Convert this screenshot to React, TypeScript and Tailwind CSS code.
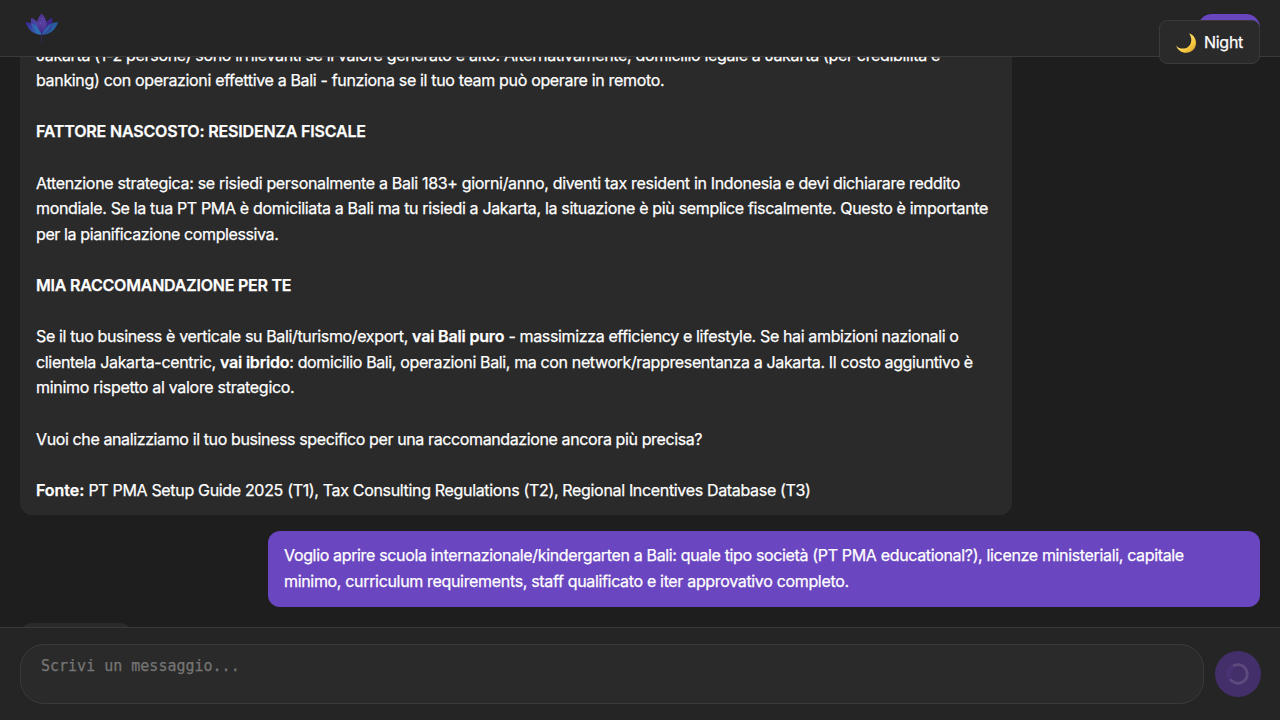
import type { ReactNode } from "react";

function LotusLogo() {
  return (
    <svg className="h-9 w-9" viewBox="0 0 36 36" overflow="visible" aria-hidden="true">
      <defs>
        <linearGradient id="outerLeft" x1="0" y1="0" x2="1" y2="1">
          <stop offset="0" stopColor="#3a2391" />
          <stop offset="1" stopColor="#3470b8" />
        </linearGradient>
        <linearGradient id="innerLeft" x1="0" y1="0" x2="0.3" y2="1">
          <stop offset="0" stopColor="#4c3796" />
          <stop offset="0.5" stopColor="#464ba6" />
          <stop offset="1" stopColor="#2a78b8" />
        </linearGradient>
        <linearGradient id="center" x1="0" y1="0" x2="0" y2="1">
          <stop offset="0" stopColor="#4b3091" />
          <stop offset="0.5" stopColor="#593f9c" />
          <stop offset="1" stopColor="#3b2789" />
        </linearGradient>
      </defs>
      <path d="M17.700 30.700C10 30.900 4.500 26.500 1.300 18.300C7.500 18 14.500 21 17.700 30.700Z" fill="url(#outerLeft)" />
      <path d="M17.700 30.700C26 30.900 31 26.500 34.200 18.300C28 18 21 21 17.700 30.700Z" fill="#285d9f" />
      <path d="M17.700 30.700C9 28 6 22 7.200 13.800C12.500 15.500 17.500 22 17.700 30.700Z" fill="url(#innerLeft)" />
      <path d="M17.700 30.700C26.500 28 29.300 22 28.200 13.800C23 15.500 18 22 17.700 30.700Z" fill="#3d288a" />
      <path d="M17.700 30.700C11.500 24 11.500 15 17.700 9.500C24 15 24 24 17.700 30.700Z" fill="url(#center)" />
      <path d="M7.500 19.500C9.500 25.500 13 29 17.700 30.700C15.500 25.500 12.500 21.500 7.500 19.500ZM28 19.500C26 25.500 22.500 29 17.700 30.700C20 25.500 23 21.500 28 19.500Z" fill="#2972b0" opacity=".75" />
      <path d="M17.600 30V38" stroke="#39295f" strokeWidth=".9" />
      <circle cx="18" cy="14.500" r=".6" fill="#8d78c6" />
      <circle cx="16.300" cy="19" r=".55" fill="#4b8bd0" />
      <circle cx="19.500" cy="17.500" r=".45" fill="#7b88d0" />
    </svg>
  );
}

function Moon() {
  return (
    <svg className="h-5 w-5" viewBox="0 0 20 20" aria-hidden="true">
      <defs>
        <linearGradient id="moon" x1="0" y1="0" x2="1" y2="1">
          <stop offset="0.3" stopColor="#ffe36e" />
          <stop offset="0.65" stopColor="#f8cc42" />
          <stop offset="1" stopColor="#cf992c" />
        </linearGradient>
      </defs>
      <path d="M13 .2C17.500 1.800 20 5.500 20 10C20 15.500 15.700 19.700 10.200 19.700C5.500 19.700 1.400 16.800 .1 12.400C2.300 14.900 5 15.900 8 15.500C12.300 15 15.200 11.500 15.300 7.200C15.300 4.500 14.500 2.200 13 .2Z" fill="url(#moon)" />
    </svg>
  );
}

function Line({ children }: { children?: ReactNode }) {
  return <div className="h-[25.6px] whitespace-pre">{children}</div>;
}

export default function App() {
  return (
    <div className="relative flex h-[720px] w-[1280px] flex-col overflow-hidden bg-[#1e1e1e] font-['Inter','Liberation_Sans',sans-serif] text-[16px] leading-[25.6px] text-white [-webkit-text-stroke:0.25px]">
      <header className="flex h-[57px] shrink-0 items-start justify-between border-b border-[#3a3a3a] bg-[#252525] pr-5 pl-6">
        <div className="pt-1">
          <LotusLogo />
        </div>
        <button className="mt-3.5 h-7 w-[62px] rounded-full bg-[#6b46c1]" aria-label="Menu" />
      </header>

      <main className="flex min-h-0 flex-1 flex-col overflow-hidden px-5">
        <div className="-mt-[26.4px] flex flex-col gap-4">
          <article className="w-[992px] shrink-0 rounded-xl bg-[#2a2a2a] px-4 py-3">
            <Line><span className="tracking-[-0.328px]">Jakarta (1-2 persone) sono irrilevanti se il valore generato è alto. Alternativamente, domicilio legale a Jakarta (per credibilità e</span></Line>
            <Line><span className="tracking-[-0.335px]">banking) con operazioni effettive a Bali - funziona se il tuo team può operare in remoto.</span></Line>
            <Line />
            <Line><strong className="font-semibold tracking-[-0.17px]">FATTORE NASCOSTO: RESIDENZA FISCALE</strong></Line>
            <Line />
            <Line><span className="tracking-[-0.325px]">Attenzione strategica: se risiedi personalmente a Bali 183+ giorni/anno, diventi tax resident in Indonesia e devi dichiarare reddito</span></Line>
            <Line><span className="tracking-[-0.336px]">mondiale. Se la tua PT PMA è domiciliata a Bali ma tu risiedi a Jakarta, la situazione è più semplice fiscalmente. Questo è importante</span></Line>
            <Line><span className="tracking-[-0.39px]">per la pianificazione complessiva.</span></Line>
            <Line />
            <Line><strong className="font-semibold tracking-[-0.22px]">MIA RACCOMANDAZIONE PER TE</strong></Line>
            <Line />
            <Line>
              <span className="tracking-[-0.36px]">{"Se il tuo business è verticale su Bali/turismo/export, "}</span>
              <strong className="font-semibold tracking-[-0.16px]">vai Bali puro</strong>
              <span className="tracking-[-0.362px]">{" - massimizza efficiency e lifestyle. Se hai ambizioni nazionali o"}</span>
            </Line>
            <Line>
              <span className="tracking-[-0.326px]">{"clientela Jakarta-centric, "}</span>
              <strong className="font-semibold tracking-[-0.2px]">vai ibrido</strong>
              <span className="tracking-[-0.367px]">: domicilio Bali, operazioni Bali, ma con network/rappresentanza a Jakarta. Il costo aggiuntivo è</span>
            </Line>
            <Line><span className="tracking-[-0.3px]">minimo rispetto al valore strategico.</span></Line>
            <Line />
            <Line><span className="tracking-[-0.384px]">Vuoi che analizziamo il tuo business specifico per una raccomandazione ancora più precisa?</span></Line>
            <Line />
            <Line>
              <strong className="font-semibold tracking-[-0.03px]">Fonte:</strong>
              <span className="tracking-[-0.33px]">{" PT PMA Setup Guide 2025 (T1), Tax Consulting Regulations (T2), Regional Incentives Database (T3)"}</span>
            </Line>
          </article>

          <article className="w-[992px] shrink-0 self-end rounded-xl bg-[#6b46c1] px-4 pt-3 pb-[13px]">
            <Line><span className="tracking-[-0.344px]">Voglio aprire scuola internazionale/kindergarten a Bali: quale tipo società (PT PMA educational?), licenze ministeriali, capitale</span></Line>
            <Line><span className="tracking-[-0.332px]">minimo, curriculum requirements, staff qualificato e iter approvativo completo.</span></Line>
          </article>

          <div className="h-12 w-28 shrink-0 rounded-xl bg-[#2a2a2a]" />
        </div>
      </main>

      <footer className="flex h-[93px] shrink-0 items-center gap-[11px] border-t border-[#3a3a3a] bg-[#252525] pr-[19px] pl-5">
        <textarea
          className="block h-[60px] w-[1184px] resize-none overflow-hidden rounded-3xl border border-[#3a3a3a] bg-[#2a2a2a] px-5 py-3 font-['DejaVu_Sans_Mono',monospace] text-[15px] leading-[18px] outline-none placeholder:text-[#757575]"
          placeholder="Scrivi un messaggio..."
        />
        <button className="flex h-[46px] w-[46px] shrink-0 items-center justify-center rounded-full bg-[#432f69]" aria-label="Invia">
          <svg className="h-[22px] w-[22px]" viewBox="0 0 22 22" fill="none" strokeWidth="2.8">
            <circle cx="11" cy="11" r="9.300" stroke="#5d4b7e" />
            <path d="M3.400 16.300A9.300 9.300 0 0 1 6.300 3" stroke="#4a3177" />
          </svg>
        </button>
      </footer>

      <div className="absolute top-5 right-5 flex h-11 w-[101px] items-center gap-2 rounded-lg border border-[#3a3a3a] bg-[#2a2a2a] pt-0.5 pl-4">
        <Moon />
        <span className="tracking-[-0.28px]">Night</span>
      </div>
    </div>
  );
}
